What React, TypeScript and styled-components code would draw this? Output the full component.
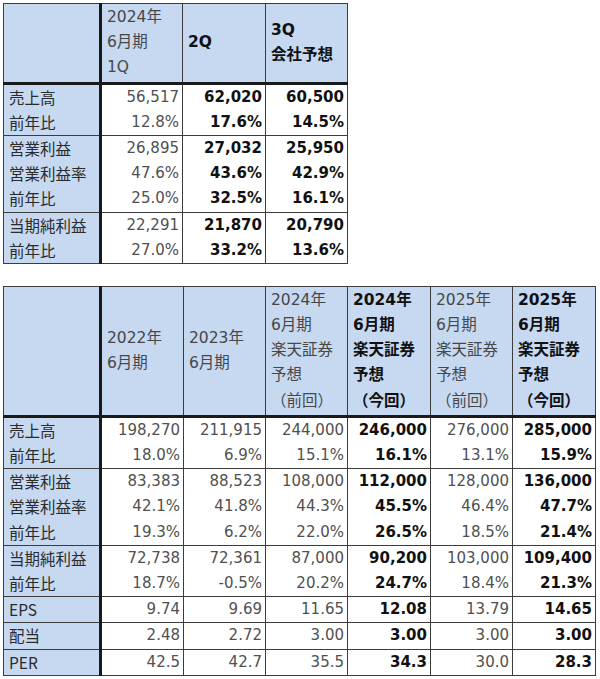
import React from "react";
import styled, { createGlobalStyle } from "styled-components";

const Global = createGlobalStyle`
  html, body { margin: 0; padding: 0; background: #ffffff; }
`;

const Page = styled.div`
  display: flex;
  flex-direction: column;
  align-items: flex-start;
  gap: 22px;
  padding: 3px;
`;

const Table = styled.table`
  border-collapse: collapse;
  table-layout: fixed;
  border: 1px solid #3c3c3c;
  font-size: 15px;
  line-height: 25px;
`;

const HeadCell = styled.th<{ $bold?: boolean; $top?: boolean }>`
  background: #c6d9f1;
  border-left: 1px solid #3c3c3c;
  border-bottom: 3px solid #1a1a1a;
  padding: 1px 2px 1px 5px;
  text-align: left;
  vertical-align: ${(p) => (p.$top ? "top" : "middle")};
  font-family: "DejaVu Sans", "Noto Sans CJK JP", sans-serif;
  font-size: 15.5px;
  font-weight: ${(p) => (p.$bold ? 700 : 400)};
  color: ${(p) => (p.$bold ? "#111111" : "#474747")};
  white-space: nowrap;
  overflow: hidden;
`;

const CornerCell = styled(HeadCell)`
  border-right: 3px solid #1a1a1a;
`;

const Line = styled.div`
  height: 25.2px;
`;

const Row = styled.tr<{ $group?: boolean }>`
  border-top: ${(p) => (p.$group ? "1px solid #3c3c3c" : "none")};
`;

const LabelCell = styled.td`
  background: #c6d9f1;
  border-right: 3px solid #1a1a1a;
  padding: 0 2px 0 5px;
  height: 25.2px;
  font-family: "Noto Sans CJK JP", sans-serif;
  font-size: 15.5px;
  color: #2b2b2b;
  white-space: nowrap;
  overflow: hidden;
`;

const NumCell = styled.td<{ $bold?: boolean }>`
  background: #ffffff;
  border-left: 1px solid #3c3c3c;
  padding: 0 3px 0 2px;
  height: 25.2px;
  text-align: right;
  font-family: "DejaVu Sans", "Noto Sans CJK JP", sans-serif;
  font-weight: ${(p) => (p.$bold ? 700 : 400)};
  color: ${(p) => (p.$bold ? "#111111" : "#505050")};
  white-space: nowrap;
  overflow: hidden;
`;

type Head = { lines: string[]; bold?: boolean; top?: boolean };
type TableData = {
  widths: number[];
  heads: Head[];
  boldCols: boolean[];
  groups: string[][][];
};

const topTable: TableData = {
  widths: [97, 82, 83, 82],
  heads: [
    { lines: ["2024年", "6月期", "1Q"], top: true },
    { lines: ["2Q"], bold: true },
    { lines: ["3Q", "会社予想"], bold: true },
  ],
  boldCols: [false, true, true],
  groups: [
    [
      ["売上高", "56,517", "62,020", "60,500"],
      ["前年比", "12.8%", "17.6%", "14.5%"],
    ],
    [
      ["営業利益", "26,895", "27,032", "25,950"],
      ["営業利益率", "47.6%", "43.6%", "42.9%"],
      ["前年比", "25.0%", "32.5%", "16.1%"],
    ],
    [
      ["当期純利益", "22,291", "21,870", "20,790"],
      ["前年比", "27.0%", "33.2%", "13.6%"],
    ],
  ],
};

const bottomTable: TableData = {
  widths: [97, 83, 82, 82, 83, 82, 83],
  heads: [
    { lines: ["2022年", "6月期"] },
    { lines: ["2023年", "6月期"] },
    { lines: ["2024年", "6月期", "楽天証券", "予想", "（前回）"] },
    { lines: ["2024年", "6月期", "楽天証券", "予想", "（今回）"], bold: true },
    { lines: ["2025年", "6月期", "楽天証券", "予想", "（前回）"] },
    { lines: ["2025年", "6月期", "楽天証券", "予想", "（今回）"], bold: true },
  ],
  boldCols: [false, false, false, true, false, true],
  groups: [
    [
      ["売上高", "198,270", "211,915", "244,000", "246,000", "276,000", "285,000"],
      ["前年比", "18.0%", "6.9%", "15.1%", "16.1%", "13.1%", "15.9%"],
    ],
    [
      ["営業利益", "83,383", "88,523", "108,000", "112,000", "128,000", "136,000"],
      ["営業利益率", "42.1%", "41.8%", "44.3%", "45.5%", "46.4%", "47.7%"],
      ["前年比", "19.3%", "6.2%", "22.0%", "26.5%", "18.5%", "21.4%"],
    ],
    [
      ["当期純利益", "72,738", "72,361", "87,000", "90,200", "103,000", "109,400"],
      ["前年比", "18.7%", "-0.5%", "20.2%", "24.7%", "18.4%", "21.3%"],
    ],
    [["EPS", "9.74", "9.69", "11.65", "12.08", "13.79", "14.65"]],
    [["配当", "2.48", "2.72", "3.00", "3.00", "3.00", "3.00"]],
    [["PER", "42.5", "42.7", "35.5", "34.3", "30.0", "28.3"]],
  ],
};

function DataTable({ data }: { data: TableData }) {
  const total = data.widths.reduce((a, b) => a + b, 0);
  return (
    <Table style={{ width: total }}>
      <colgroup>
        {data.widths.map((w, i) => (
          <col key={i} style={{ width: w }} />
        ))}
      </colgroup>
      <thead>
        <tr>
          <CornerCell />
          {data.heads.map((h, i) => (
            <HeadCell key={i} $bold={h.bold} $top={h.top}>
              {h.lines.map((l, j) => (
                <Line key={j}>{l}</Line>
              ))}
            </HeadCell>
          ))}
        </tr>
      </thead>
      <tbody>
        {data.groups.map((g, gi) =>
          g.map((r, ri) => (
            <Row key={`${gi}-${ri}`} $group={ri === 0 && gi > 0}>
              <LabelCell>{r[0]}</LabelCell>
              {r.slice(1).map((v, ci) => (
                <NumCell key={ci} $bold={data.boldCols[ci]}>
                  {v}
                </NumCell>
              ))}
            </Row>
          ))
        )}
      </tbody>
    </Table>
  );
}

export default function App() {
  return (
    <>
      <Global />
      <Page>
        <DataTable data={topTable} />
        <DataTable data={bottomTable} />
      </Page>
    </>
  );
}
